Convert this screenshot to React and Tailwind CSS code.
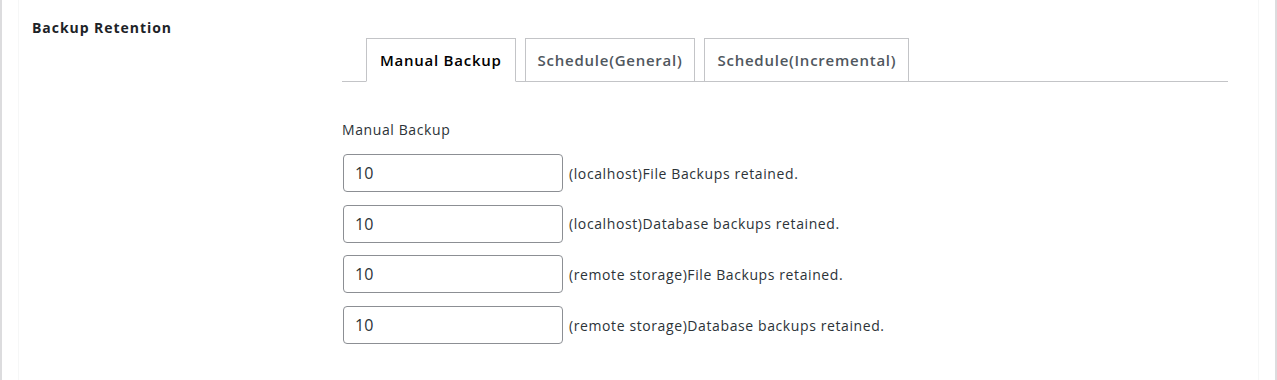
import React, { useState } from "react";

const FONT = { fontFamily: '"Open Sans", "Noto Sans", Arial, sans-serif' };

const tabs = ["Manual Backup", "Schedule(General)", "Schedule(Incremental)"];

const rows = [
  "(localhost)File Backups retained.",
  "(localhost)Database backups retained.",
  "(remote storage)File Backups retained.",
  "(remote storage)Database backups retained.",
];

function RetentionRow({ label }) {
  return (
    <div className="flex items-center">
      <input
        type="text"
        defaultValue="10"
        className="h-[38px] w-[220px] rounded-[4px] border border-[#8c8f94] bg-white px-[11px] text-[16px] text-[#2c3338] outline-none"
        style={FONT}
      />
      <span className="ml-[6px] text-[14px] tracking-[0.6px] text-[#2c3338]">{label}</span>
    </div>
  );
}

export default function App() {
  const [active, setActive] = useState(0);

  return (
    <div
      className="h-[380px] w-[1277px] overflow-hidden border-x-2 border-[#dcdcde] bg-white"
      style={FONT}
    >
      <div className="ml-[16px] mr-[16px] flex h-full border-x border-[#f6f7f7]">
        <div className="w-[323px] shrink-0 pl-[13px] pt-[18px]">
          <h2 className="text-[14px] font-bold leading-[20px] tracking-[0.95px] text-[#1d2327]">
            Backup Retention
          </h2>
        </div>

        <div className="w-[886px] pt-[38px]">
          <div className="flex h-[44px] items-end border-b border-[#c3c4c7] pl-[24px]">
            {tabs.map((tab, i) => (
              <button
                key={tab}
                onClick={() => setActive(i)}
                className={
                  i === active
                    ? "-mb-px mr-[9px] h-[44px] border border-[#c3c4c7] border-b-white bg-white px-[13px] text-[15px] font-semibold tracking-[0.75px] text-black"
                    : "mr-[9px] h-[43px] border border-b-0 border-[#c3c4c7] bg-white px-[12px] text-[15px] font-semibold tracking-[0.75px] text-[#50575e]"
                }
              >
                {tab}
              </button>
            ))}
          </div>

          <p className="mt-[38px] text-[14px] leading-[20px] tracking-[0.6px] text-[#2c3338]">
            Manual Backup
          </p>

          <div className="mt-[14px] flex flex-col gap-[12.7px] pl-px">
            {rows.map((r) => (
              <RetentionRow key={r} label={r} />
            ))}
          </div>
        </div>
      </div>
    </div>
  );
}
